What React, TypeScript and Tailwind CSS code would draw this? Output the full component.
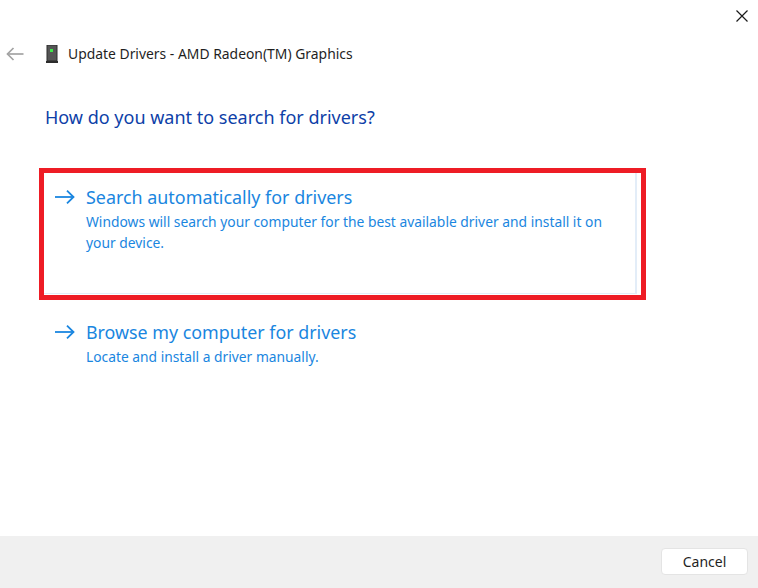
const font = { fontFamily: '"Noto Sans", sans-serif' };

function ArrowIcon() {
  return (
    <svg width="21" height="14" viewBox="0 0 21 14" fill="none" stroke="#1a86e0" strokeWidth="1.8">
      <path d="M1 7H19.5" />
      <path d="M13 0.7L19.5 7L13 13.3" />
    </svg>
  );
}

function DeviceIcon() {
  return (
    <svg width="12" height="18" viewBox="0 0 12 18">
      <rect x="1" y="0" width="10" height="16" fill="#555555" stroke="#2c2c2c" strokeWidth="1" />
      <rect x="4" y="4" width="3" height="3" fill="#3fe84a" />
      <rect x="0" y="16" width="12" height="2" fill="#2c2c2c" />
    </svg>
  );
}

export default function App() {
  return (
    <div className="relative flex h-[588px] w-[758px] flex-col overflow-hidden bg-white" style={font}>
      {/* Close */}
      <div className="flex h-[30px] shrink-0 justify-end pr-[10px] pt-[10px]">
        <svg width="12" height="12" viewBox="0 0 12 12" stroke="#1a1a1a" strokeWidth="1.2" fill="none">
          <path d="M0.5 0.5L11.5 11.5M11.5 0.5L0.5 11.5" />
        </svg>
      </div>

      {/* Title row */}
      <div className="flex h-[48px] shrink-0 items-center pl-[6px]">
        <svg width="18" height="14" viewBox="0 0 18 14" fill="none" stroke="#a3a3a3" strokeWidth="1.7">
          <path d="M17.5 7H1.5" />
          <path d="M7.5 1L1.5 7L7.5 13" />
        </svg>
        <span className="ml-[22px]"><DeviceIcon /></span>
        <span className="ml-[10px] text-[13.9px] leading-5 text-[#1f1f1f]">Update Drivers - AMD Radeon(TM) Graphics</span>
      </div>

      <h1 className="ml-[45px] mt-[27px] text-[18px] leading-6 font-normal text-[#0e3fa8]">How do you want to search for drivers?</h1>

      {/* Search option, with red highlight */}
      <div className="ml-[39px] mt-[39px] h-[132px] w-[607px] shrink-0 border-[5px] border-[#ee1c25]">
        <div className="flex h-[121px] w-[593px] border-r-2 border-b border-[#e3edf8] pl-[10px] pt-[12px]">
          <span className="mt-[5px]"><ArrowIcon /></span>
          <div className="ml-[11px] w-[530px]">
            <div className="text-[17.9px] leading-6 text-[#1a86e0]">Search automatically for drivers</div>
            <p className="mt-[3px] text-[13.83px] leading-[20.5px] text-[#1a86e0]">
              Windows will search your computer for the best available driver and install it on your device.
            </p>
          </div>
        </div>
      </div>

      {/* Browse option */}
      <div className="ml-[54px] mt-[20px] flex">
        <span className="mt-[5px]"><ArrowIcon /></span>
        <div className="ml-[11px]">
          <div className="text-[17.85px] leading-6 text-[#1a86e0]">Browse my computer for drivers</div>
          <p className="mt-[2px] text-[13.8px] leading-[21px] text-[#1a86e0]">Locate and install a driver manually.</p>
        </div>
      </div>

      {/* Footer */}
      <div className="mt-auto flex h-[52px] shrink-0 items-center justify-end bg-[#f0f0f0] pb-[1px] pr-[10px]">
        <button className="h-[27px] w-[87px] rounded-[4px] border border-[#e4e4e4] bg-white text-[14px] text-[#1f1f1f]">Cancel</button>
      </div>
    </div>
  );
}
